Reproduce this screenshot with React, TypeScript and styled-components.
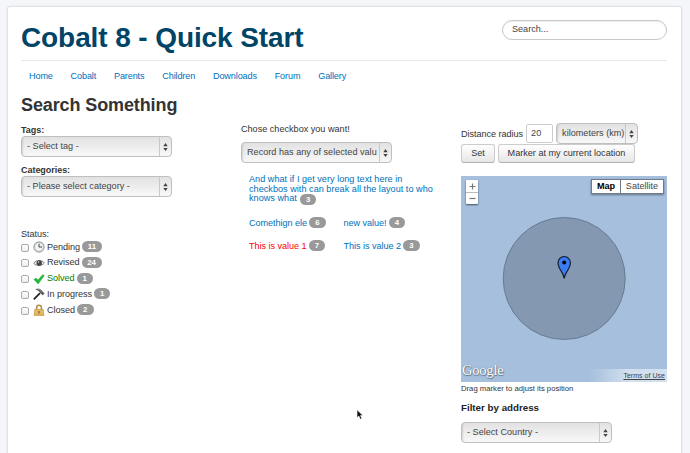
import React from "react";
import styled, { createGlobalStyle } from "styled-components";

const GlobalStyle = createGlobalStyle`
  * { box-sizing: border-box; }
  body {
    margin: 0;
    background: #f4f6f9;
    color: #333;
    font-family: "Liberation Sans", Arial, Helvetica, sans-serif;
    font-size: 9.1px;
    line-height: 12px;
    overflow: hidden;
  }
`;

const Page = styled.div`
  position: relative;
  height: 453px;
  padding: 6px 8px 0 7px;
  overflow: hidden;
`;

const Card = styled.main`
  height: 460px;
  padding: 0 14px 0 13px;
  background: #fff;
  border: 1px solid #dfe1e3;
  border-radius: 3px;
  box-shadow: 0 0 2px rgba(0, 0, 0, 0.08);
`;

const Header = styled.header`
  display: flex;
  justify-content: space-between;
  height: 54px;
  border-bottom: 1px solid #e8e8e8;
`;

const SiteTitle = styled.h1`
  margin: 14px 0 0;
  color: #004466;
  font-size: 28px;
  line-height: 34px;
  letter-spacing: -0.1px;
  white-space: nowrap;
`;

const SearchBox = styled.div`
  display: flex;
  align-items: center;
  width: 165px;
  height: 20px;
  margin-top: 13px;
  padding: 0 0 2px 9px;
  border: 1px solid #c8c8c8;
  border-radius: 10px;
  box-shadow: inset 0 1px 1px rgba(0, 0, 0, 0.07);
  color: #444;
`;

const Nav = styled.nav`
  display: flex;
  gap: 17.8px;
  padding: 9px 0 0 8px;
  height: 34px;
  letter-spacing: -0.12px;
`;

const Link = styled.a<{ $active?: boolean }>`
  color: ${(p) => (p.$active ? "#f00" : "#0070bb")};
  text-decoration: none;
  white-space: nowrap;
`;

const PageHeading = styled.h2`
  margin: 0;
  height: 29px;
  font-size: 18px;
  line-height: 21px;
  letter-spacing: -0.11px;
`;

const Columns = styled.div`
  display: grid;
  grid-template-columns: 206px 206px 206px;
  column-gap: 14px;
`;

const Column = styled.section`
  min-width: 0;
`;

const Field = styled.div`
  height: 40px;
`;

const Label = styled.div<{ $bold?: boolean }>`
  height: 12px;
  font-weight: ${(p) => (p.$bold ? "bold" : "normal")};
  font-size: ${(p) => (p.$bold ? "9px" : "9.1px")};
  letter-spacing: -0.04px;
`;

const Prompt = styled.div`
  height: 18px;
  line-height: 11px;
`;

const SelectBox = styled.div<{ $width?: number }>`
  display: flex;
  flex: none;
  width: ${(p) => p.$width ?? 151}px;
  height: 21px;
  border: 1px solid #bfbfbf;
  border-radius: 4px;
  background: linear-gradient(#e2e2e2, #efefef 60%, #f8f8f8);
  box-shadow: inset 2px 0 2px -1px rgba(0, 0, 0, 0.12);
  color: #444;
`;

const SelectValue = styled.span`
  flex: 1;
  min-width: 0;
  padding-left: 5px;
  line-height: 19px;
  overflow: hidden;
  white-space: nowrap;
  letter-spacing: 0.01px;
`;

const SelectArrows = styled.span`
  display: flex;
  align-items: center;
  justify-content: center;
  width: 12px;
  border-left: 1px solid #c9c9c9;
`;

const StatusList = styled.div`
  margin-top: 24px;
`;

const StatusRows = styled.div`
  margin-top: -1.4px;
`;

const StatusRow = styled.label<{ $solved?: boolean }>`
  display: flex;
  align-items: center;
  height: 15.8px;
  letter-spacing: -0.05px;
  color: ${(p) => (p.$solved ? "#008000" : "#333")};
`;

const Checkbox = styled.input`
  appearance: none;
  width: 8px;
  height: 8px;
  margin: 2px 4px 0 0;
  border: 1px solid #aaa;
  border-radius: 2px;
  background: linear-gradient(#fff, #eee);
`;

const StatusIcon = styled.svg`
  width: 12px;
  height: 12px;
  margin: 1px 2px 0 0;
`;

const Badge = styled.span<{ $inline?: boolean }>`
  display: inline-block;
  min-width: 16.5px;
  height: 11px;
  margin-left: ${(p) => (p.$inline ? "0.5px" : "2px")};
  padding: 0 5.8px;
  border-radius: 6px;
  background: #999;
  color: #fff;
  font-size: 7.8px;
  font-weight: bold;
  line-height: 11px;
  text-align: center;
  vertical-align: ${(p) => (p.$inline ? "-1px" : "baseline")};
`;

const ValueGrid = styled.div`
  display: grid;
  grid-template-columns: 94.5px 94px;
  grid-template-rows: 36px 23px 23px;
  margin: 12px 0 0 8px;
`;

const LongValue = styled.div`
  grid-column: 1 / 3;
  line-height: 9.6px;
  letter-spacing: 0.03px;
`;

const ValueItem = styled.div`
  display: flex;
  align-items: center;
  height: 23px;
  letter-spacing: -0.04px;
`;

const ControlRow = styled.div<{ $height: number }>`
  display: flex;
  align-items: center;
  gap: 3px;
  height: ${(p) => p.$height}px;
  white-space: nowrap;
`;

const NumberBox = styled.div`
  width: 27px;
  height: 19px;
  padding-left: 4px;
  border: 1px solid #ccc;
  border-radius: 2px;
  line-height: 17px;
  color: #444;
`;

const Button = styled.button<{ $width: number }>`
  width: ${(p) => p.$width}px;
  height: 19px;
  padding: 0;
  border: 1px solid #ccc;
  border-bottom-color: #b3b3b3;
  border-radius: 3px;
  background: linear-gradient(#fff, #e6e6e6);
  color: #333;
  font: inherit;
`;

const Map = styled.div`
  position: relative;
  width: 206px;
  height: 206px;
  margin-top: 13px;
  background: #a5bfdd;
  overflow: hidden;
`;

const MapShapes = styled.svg`
  display: block;
`;

const ZoomControl = styled.div`
  position: absolute;
  left: 5px;
  top: 4px;
  width: 12px;
  border-radius: 1px;
  background: #fff;
  box-shadow: 0 1px 2px rgba(0, 0, 0, 0.6);
`;

const ZoomStep = styled.div`
  display: flex;
  align-items: center;
  justify-content: center;
  height: 12px;
  & + & { border-top: 1px solid #bbb; }
`;

const MapTypes = styled.div`
  position: absolute;
  right: 3px;
  top: 3px;
  display: flex;
  border: 1px solid #717b87;
  background: #fff;
  box-shadow: 0 1px 2px rgba(0, 0, 0, 0.4);
`;

const MapType = styled.span<{ $on?: boolean }>`
  width: ${(p) => (p.$on ? 28 : 43)}px;
  height: 13px;
  line-height: 13px;
  text-align: center;
  font-weight: ${(p) => (p.$on ? "bold" : "normal")};
  color: ${(p) => (p.$on ? "#000" : "#444")};
  & + & { border-left: 1px solid #717b87; }
`;

const GoogleMark = styled.span`
  position: absolute;
  left: 1px;
  bottom: 3px;
  color: #fff;
  font-family: "Liberation Serif", serif;
  font-size: 14.5px;
  line-height: 17px;
  letter-spacing: -0.2px;
  text-shadow: 0 0 1px #56687c, 0.5px 1px 1px #56687c;
`;

const Terms = styled.span`
  position: absolute;
  right: 0;
  bottom: 0;
  width: 78px;
  height: 13px;
  padding-right: 2px;
  background: linear-gradient(to right, rgba(255, 255, 255, 0), rgba(255, 255, 255, 0.5) 50%);
  color: #444;
  font-size: 7px;
  line-height: 13px;
  letter-spacing: 0.03px;
  text-align: right;
  text-decoration: underline;
`;

const MapHint = styled.div`
  height: 20px;
  font-size: 7.7px;
  line-height: 13px;
`;

const FilterHeading = styled.h3`
  height: 20px;
  margin: 0;
  font-size: 9.75px;
  line-height: 12px;
  color: #222;
`;

const Pointer = styled.svg`
  position: absolute;
  left: 356px;
  top: 409px;
`;

function Select({ value, width }: { value: string; width?: number }) {
  return (
    <SelectBox $width={width}>
      <SelectValue>{value}</SelectValue>
      <SelectArrows>
        <svg width="5" height="8" viewBox="0 0 5 8">
          <path d="M.3 3.3 2.5 0l2.2 3.3zM.3 4.9h4.4L2.5 8z" fill="#444" />
        </svg>
      </SelectArrows>
    </SelectBox>
  );
}

const icons = {
  clock: (
    <>
      <circle cx="6" cy="6" r="5.2" fill="#c4c8ca" stroke="#a2a7aa" />
      <circle cx="6" cy="6" r="3.8" fill="#f3f3f3" />
      <path d="M6 2.8V6h3" fill="none" stroke="#444" />
    </>
  ),
  eye: (
    <>
      <path d="M.7 6.3C3 2.8 8.7 2.4 11.4 6 8.7 9.3 3.6 9.7.7 6.3z" fill="#e8e8e8" stroke="#777" strokeWidth=".9" />
      <circle cx="6.2" cy="6" r="2.7" fill="#444" />
      <circle cx="5.5" cy="5" r=".8" fill="#ddd" />
    </>
  ),
  check: <path d="M.9 6.6 3.1 5.1l1.9 2L9.6 1.7l1.7.9L5.2 11z" fill="#22b93c" stroke="#159b2c" strokeWidth=".4" />,
  hammer: (
    <>
      <path d="M7 5.1.8 11.3" stroke="#252525" strokeWidth="1.8" />
      <path d="M2.8 1.4C6 .1 8.1 1.4 9.4 3.6l1.8 2-1.5 1.5-2.1-2C6.7 3.1 4.9 2.1 2.8 1.4z" fill="#555" stroke="#333" strokeWidth=".4" />
      <path d="M5.2 1.5c1.7.3 2.8 1.4 3.7 2.7" stroke="#ccc" strokeWidth=".5" fill="none" />
    </>
  ),
  lock: (
    <>
      <path d="M3.6 6V3.8a2.4 2.6 0 0 1 4.8 0V6" fill="none" stroke="#b08b45" strokeWidth="1.4" />
      <path d="M1.8 5.2h8.4l.8 6.3H1z" fill="#dcae55" stroke="#bd8a34" strokeWidth=".5" />
      <path d="M2 7.1h8M1.7 9h8.6" stroke="#efd18c" strokeWidth=".6" />
      <path d="M6 7v2.5" stroke="#6f4e1c" />
    </>
  ),
};

const statuses: { name: string; count: number; icon: keyof typeof icons }[] = [
  { name: "Pending", count: 11, icon: "clock" },
  { name: "Revised", count: 24, icon: "eye" },
  { name: "Solved", count: 1, icon: "check" },
  { name: "In progress", count: 1, icon: "hammer" },
  { name: "Closed", count: 2, icon: "lock" },
];

const values = [
  { name: "Comethign ele", count: 6 },
  { name: "new value!", count: 4 },
  { name: "This is value 1", count: 7, active: true },
  { name: "This is value 2", count: 3 },
];

const menu = ["Home", "Cobalt", "Parents", "Children", "Downloads", "Forum", "Gallery"];

export default function App() {
  return (
    <Page>
      <GlobalStyle />
      <Card>
        <Header>
          <SiteTitle>Cobalt 8 - Quick Start</SiteTitle>
          <SearchBox>Search...</SearchBox>
        </Header>
        <Nav>
          {menu.map((m) => (
            <Link key={m}>{m}</Link>
          ))}
        </Nav>
        <PageHeading>Search Something</PageHeading>
        <Columns>
          <Column>
            <Field>
              <Label $bold>Tags:</Label>
              <Select value="- Select tag -" />
            </Field>
            <Field>
              <Label $bold>Categories:</Label>
              <Select value="- Please select category -" />
            </Field>
            <StatusList>
              <Label>Status:</Label>
              <StatusRows>
                {statuses.map((s) => (
                  <StatusRow key={s.name} $solved={s.icon === "check"}>
                    <Checkbox type="checkbox" />
                    <StatusIcon viewBox="0 0 12 12">{icons[s.icon]}</StatusIcon>
                    {s.name}
                    <Badge>{s.count}</Badge>
                  </StatusRow>
                ))}
              </StatusRows>
            </StatusList>
          </Column>
          <Column>
            <Prompt>Chose checkbox you want!</Prompt>
            <Select value="Record has any of selected valu" />
            <ValueGrid>
              <LongValue>
                <Link>
                  And what if I get very long text here in
                  <br />
                  checkbos with can break all the layout to who
                  <br />
                  knows what
                </Link>{" "}
                <Badge $inline>3</Badge>
              </LongValue>
              {values.map((v) => (
                <ValueItem key={v.name}>
                  <Link $active={v.active}>{v.name}</Link>
                  <Badge>{v.count}</Badge>
                </ValueItem>
              ))}
            </ValueGrid>
          </Column>
          <Column>
            <ControlRow $height={19}>
              <Label>Distance radius</Label>
              <NumberBox>20</NumberBox>
              <Select value="kilometers (km)" width={82} />
            </ControlRow>
            <ControlRow $height={20}>
              <Button $width={34}>Set</Button>
              <Button $width={137}>Marker at my current location</Button>
            </ControlRow>
            <Map>
              <MapShapes width="206" height="206">
                <circle cx="103.2" cy="102.5" r="61" fill="#8498b2" stroke="#677b92" />
                <path
                  d="M103.2 102.5c-.2-6-6.2-9.2-6.2-15.8a6.2 6.2 0 0 1 12.4 0c0 6.6-6 9.8-6.2 15.8z"
                  fill="#3b7df0"
                  stroke="#111827"
                  strokeWidth="1.1"
                />
                <circle cx="103.2" cy="86.6" r="2" fill="#050505" />
              </MapShapes>
              <ZoomControl>
                <ZoomStep>
                  <svg width="7" height="7" viewBox="0 0 7 7">
                    <path d="M.5 3.5h6M3.5.5v6" stroke="#777" strokeWidth="1.2" />
                  </svg>
                </ZoomStep>
                <ZoomStep>
                  <svg width="7" height="7" viewBox="0 0 7 7">
                    <path d="M.5 3.5h6" stroke="#777" strokeWidth="1.2" />
                  </svg>
                </ZoomStep>
              </ZoomControl>
              <MapTypes>
                <MapType $on>Map</MapType>
                <MapType>Satellite</MapType>
              </MapTypes>
              <GoogleMark>Google</GoogleMark>
              <Terms>Terms of Use</Terms>
            </Map>
            <MapHint>Drag marker to adjust its position</MapHint>
            <FilterHeading>Filter by address</FilterHeading>
            <Select value="- Select Country -" />
          </Column>
        </Columns>
      </Card>
      <Pointer width="8" height="12" viewBox="0 0 8 12">
        <path d="M1 .8v8l1.9-1.7 1.3 3.2 1.6-.7-1.3-3h2.5z" fill="#111" stroke="#fff" strokeWidth=".6" />
      </Pointer>
    </Page>
  );
}
